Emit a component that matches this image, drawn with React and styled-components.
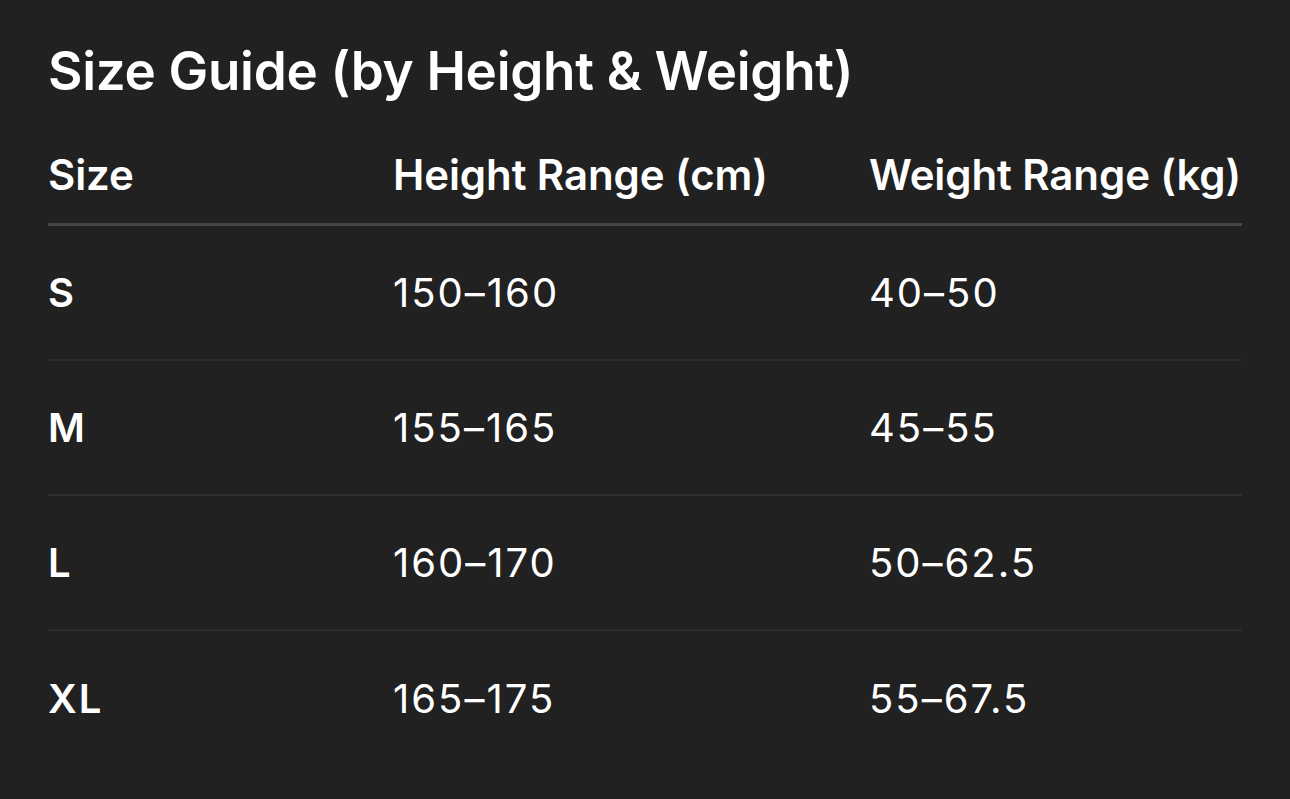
import React from "react";
import styled, { createGlobalStyle } from "styled-components";

const Global = createGlobalStyle`
  html, body {
    margin: 0;
    padding: 0;
    background: #212121;
  }
  body {
    font-family: Inter, "Noto Sans", "Liberation Sans", sans-serif;
    color: #ffffff;
    -webkit-font-smoothing: antialiased;
  }
`;

const Page = styled.div`
  width: 1290px;
  height: 799px;
  box-sizing: border-box;
  padding: 41px 48px 0 48px;
  background: #212121;
  overflow: hidden;
`;

const Title = styled.h1`
  margin: 0;
  font-size: 53px;
  font-weight: 600;
  line-height: 60px;
  letter-spacing: -0.3px;
`;

const Table = styled.div`
  margin-top: 28px;
  display: flex;
  flex-direction: column;
`;

const Row = styled.div`
  display: grid;
  grid-template-columns: 345px 476px 1fr;
  align-items: center;
  box-sizing: border-box;
  height: ${(p) => (p.head ? "97px" : "135px")};
  padding-bottom: ${(p) => (p.head ? "2px" : "0")};
  border-bottom: ${(p) =>
    p.head ? "3px solid #454545" : p.last ? "none" : "2px solid #2d2d2d"};
`;

const Cell = styled.div`
  font-size: ${(p) => (p.head ? "42px" : "40px")};
  line-height: 48px;
  font-weight: ${(p) => (p.strong ? 600 : 400)};
  letter-spacing: ${(p) => (p.head ? "-0.1px" : "2px")};
  color: #ffffff;
  white-space: nowrap;
`;

const rows = [
  ["S", "150–160", "40–50"],
  ["M", "155–165", "45–55"],
  ["L", "160–170", "50–62.5"],
  ["XL", "165–175", "55–67.5"],
];

export default function App() {
  return (
    <Page>
      <Global />
      <Title>Size Guide (by Height &amp; Weight)</Title>
      <Table>
        <Row head>
          <Cell head strong>Size</Cell>
          <Cell head strong>Height Range (cm)</Cell>
          <Cell head strong>Weight Range (kg)</Cell>
        </Row>
        {rows.map((r, i) => (
          <Row key={r[0]} last={i === rows.length - 1}>
            <Cell strong>{r[0]}</Cell>
            <Cell>{r[1]}</Cell>
            <Cell>{r[2]}</Cell>
          </Row>
        ))}
      </Table>
    </Page>
  );
}
